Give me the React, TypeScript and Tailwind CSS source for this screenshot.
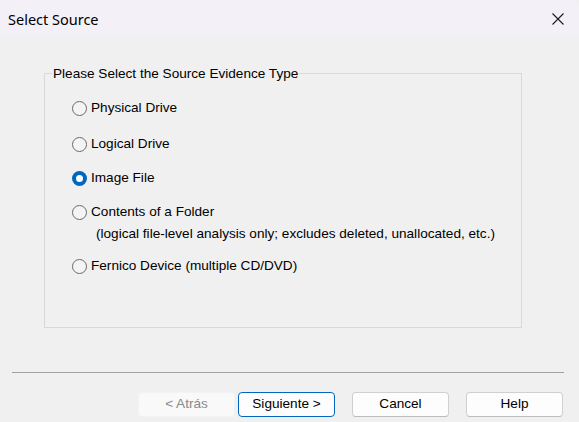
import React from "react";

function Radio({ checked }: { checked?: boolean }) {
  if (checked) {
    return (
      <span className="w-[15px] h-[15px] rounded-full bg-[#0067c0] flex items-center justify-center shrink-0">
        <span className="w-[7px] h-[7px] rounded-full bg-white" />
      </span>
    );
  }
  return <span className="w-[15px] h-[15px] rounded-full border border-[#6a6a6a] bg-[#f4f4f4] shrink-0" />;
}

function Row({ label, checked, className }: { label: string; checked?: boolean; className: string }) {
  return (
    <div className={"flex items-center h-[16px] gap-[4px] " + className}>
      <Radio checked={checked} />
      <span className="leading-[16px]">{label}</span>
    </div>
  );
}

export default function App() {
  return (
    <div
      className="w-[579px] h-[422px] bg-[#f0f0f0] flex flex-col text-[13.6px] text-black overflow-hidden"
      style={{ fontFamily: '"Liberation Sans", Arial, sans-serif' }}
    >
      <div className="h-[37px] bg-[#f3f0f8] flex items-center justify-between pl-[8px] pr-[15px] shrink-0 rounded-tr-[8px]">
        <span className="text-[14.5px] leading-[20px]" style={{ fontFamily: '"Noto Sans", "Open Sans", sans-serif' }}>
          Select Source
        </span>
        <svg width="12" height="12" viewBox="0 0 12 12" className="block">
          <path d="M0.5 0.5 L11.5 11.5 M11.5 0.5 L0.5 11.5" stroke="#1a1a1a" strokeWidth="1.1" />
        </svg>
      </div>

      <fieldset className="ml-[44px] mt-[29px] w-[478px] h-[262px] border border-[#d9d9d9] shrink-0">
        <legend className="ml-[7px] px-[1px] leading-[15px]">Please Select the Source Evidence Type</legend>
        <div className="pl-[27px] flex flex-col">
          <Row label="Physical Drive" className="mt-[19px]" />
          <Row label="Logical Drive" className="mt-[20px]" />
          <Row label="Image File" checked className="mt-[18px]" />
          <Row label="Contents of a Folder" className="mt-[18px]" />
          <div className="h-[16px] leading-[16px] mt-[6px] pl-[24px]">
            (logical file-level analysis only; excludes deleted, unallocated, etc.)
          </div>
          <Row label="Fernico Device (multiple CD/DVD)" className="mt-[16px]" />
        </div>
      </fieldset>

      <div className="mt-[44px] ml-[12px] mr-[15px] border-t border-[#a0a0a0] shrink-0" />

      <div className="mt-[19px] flex justify-end pr-[16px] shrink-0">
        <button className="w-[97px] h-[25px] rounded-[4px] bg-[#f9f9f9] border border-[#f3f3f3] text-[#8a8a8a]">
          &lt; Atrás
        </button>
        <button className="ml-[3px] w-[97px] h-[25px] rounded-[4px] bg-[#fdfdfd] border border-[#0067c0]">
          Siguiente &gt;
        </button>
        <button className="ml-[17px] w-[97px] h-[25px] rounded-[4px] bg-[#fdfdfd] border border-[#d0d0d0] border-b-[#bcbcbc]">
          Cancel
        </button>
        <button className="ml-[17px] w-[97px] h-[25px] rounded-[4px] bg-[#fdfdfd] border border-[#d0d0d0] border-b-[#bcbcbc]">
          Help
        </button>
      </div>
    </div>
  );
}
